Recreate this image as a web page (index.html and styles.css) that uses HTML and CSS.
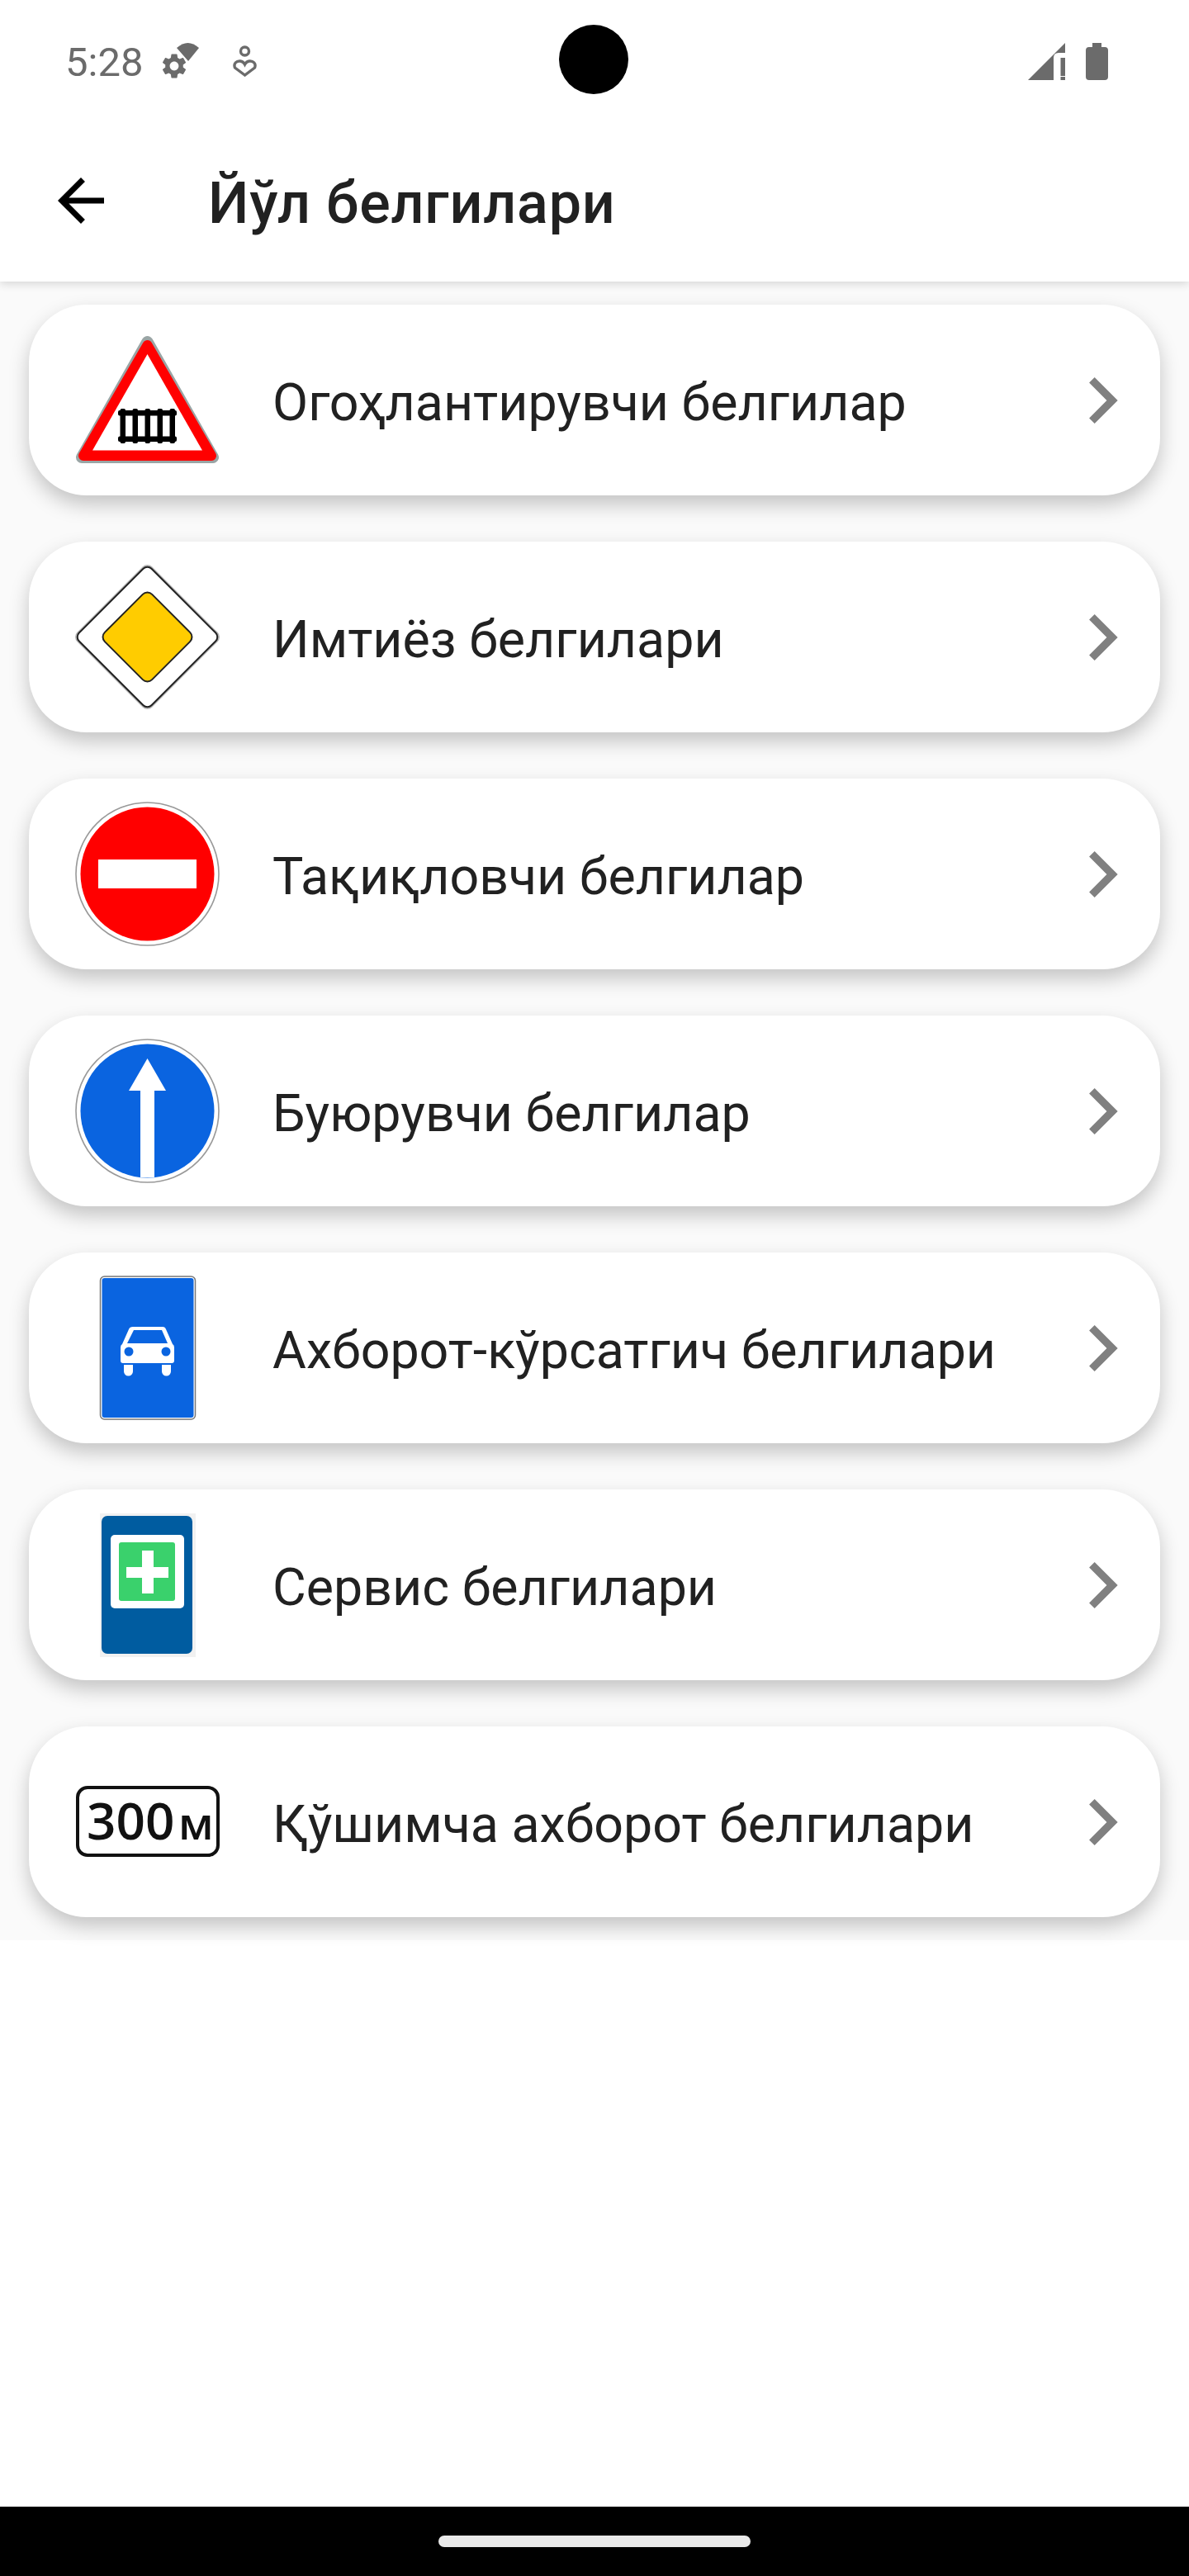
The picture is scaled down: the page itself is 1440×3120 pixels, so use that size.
FILE: index.html
```html
<!DOCTYPE html>
<html lang="uz">
<head>
  <meta charset="UTF-8">
  <title>Йўл белгилари</title>
  <link rel="stylesheet" href="styles.css">
</head>
<body>

<div class="screen">
  <div class="status-bar">
    <span class="time">5:28</span>
    <svg class="st-gear" width="44" height="44" viewBox="0 0 44 44">
      <svg x="-4" y="10" width="36" height="36" viewBox="0 0 24 24"><path d="M19.14 12.94c.04-.3.06-.61.06-.94 0-.32-.02-.64-.07-.94l2.03-1.58c.18-.14.23-.41.12-.61l-1.92-3.32c-.12-.22-.37-.29-.59-.22l-2.39.96c-.5-.38-1.03-.7-1.62-.94l-.36-2.54c-.04-.24-.24-.41-.48-.41h-3.84c-.24 0-.43.17-.47.41l-.36 2.54c-.59.24-1.13.57-1.62.94l-2.39-.96c-.22-.08-.47 0-.59.22L2.74 8.87c-.12.21-.08.47.12.61l2.03 1.58c-.05.3-.09.63-.09.94s.02.64.07.94l-2.03 1.58c-.18.14-.23.41-.12.61l1.92 3.32c.12.22.37.29.59.22l2.39-.96c.5.38 1.03.7 1.62.94l.36 2.54c.05.24.24.41.48.41h3.84c.24 0 .44-.17.47-.41l.36-2.54c.59-.24 1.13-.56 1.62-.94l2.39.96c.22.08.47 0 .59-.22l1.92-3.32c.12-.22.07-.47-.12-.61l-2.01-1.58zM12 15.6c-1.98 0-3.6-1.62-3.6-3.6s1.62-3.6 3.6-3.6 3.6 1.62 3.6 3.6-1.62 3.6-3.6 3.6z"/></svg>
      <path d="M17 6Q30.5-6 44 6L31 22Z"/>
    </svg>
    <svg class="st-person" width="30" height="38" viewBox="0 0 30 38">
      <circle cx="14.5" cy="7" r="5"/>
      <path d="M14.5 36L2.5 27C0.5 22 4.5 18.5 9 19C11.5 19.3 13.5 21 14.5 23C15.5 21 17.5 19.3 20 19C24.5 18.5 28.5 22 26.5 27Z"/>
    </svg>
    <span class="spacer"></span>
    <svg class="st-signal" width="46" height="45" viewBox="0 0 46 45">
      <path d="M0 45L45 0V12H37Q31 12 31 18V45Z"/>
      <rect x="39.5" y="18" width="5.5" height="22"/>
      <rect x="39.5" y="41" width="5.5" height="4"/>
    </svg>
    <svg class="st-battery" width="27" height="45" viewBox="0 0 27 45">
      <path d="M8 0h11v5h4a4 4 0 0 1 4 4v32a4 4 0 0 1-4 4H4a4 4 0 0 1-4-4V9a4 4 0 0 1 4-4h4z"/>
    </svg>
    <div class="camera"></div>
  </div>

  <div class="app-bar">
    <svg class="back" width="84" height="84" viewBox="0 0 24 24"><path d="M20 11H7.83l5.59-5.59L12 4l-8 8 8 8 1.41-1.41L7.83 13H20v-2z"/></svg>
    <h1 class="title">Йўл белгилари</h1>
  </div>

  <div class="list">
    <div class="card">
      <svg class="sign" viewBox="0 0 175 175">
        <polygon points="87.5,17 167,157 8,157" fill="#9aa5a5" stroke="#9aa5a5" stroke-width="14" stroke-linejoin="round"/>
        <polygon points="87.5,21 165,155 10,155" fill="#ff0000" stroke="#ff0000" stroke-width="12" stroke-linejoin="round"/>
        <polygon points="87.5,32 154,148.5 21,148.5" fill="#fff"/>
        <g fill="#000">
          <rect x="52" y="100" width="71" height="6.5" rx="2"/>
          <rect x="52" y="131.5" width="71" height="6.5" rx="2"/>
          <rect x="54.5" y="98" width="6.5" height="42" rx="2"/>
          <rect x="69.5" y="98" width="6.5" height="42" rx="2"/>
          <rect x="84.5" y="98" width="6.5" height="42" rx="2"/>
          <rect x="99.5" y="98" width="6.5" height="42" rx="2"/>
          <rect x="114.5" y="98" width="6.5" height="42" rx="2"/>
        </g>
      </svg>
      <span class="label">Огоҳлантирувчи белгилар</span>
      <svg class="chevron" width="112" height="112" viewBox="0 0 24 24"><path d="M10 6L8.59 7.41 13.17 12l-4.58 4.59L10 18l6-6z"/></svg>
    </div>

    <div class="card">
      <svg class="sign" viewBox="0 0 175 175">
        <rect x="23.3" y="23.3" width="128.4" height="128.4" rx="8" transform="rotate(45 87.5 87.5)" fill="#b5b5b5"/>
        <rect x="25.5" y="25.5" width="124" height="124" rx="7" transform="rotate(45 87.5 87.5)" fill="#fff" stroke="#222" stroke-width="2"/>
        <rect x="47" y="47" width="81" height="81" rx="8" transform="rotate(45 87.5 87.5)" fill="#ffcc00" stroke="#222" stroke-width="2"/>
      </svg>
      <span class="label">Имтиёз белгилари</span>
      <svg class="chevron" width="112" height="112" viewBox="0 0 24 24"><path d="M10 6L8.59 7.41 13.17 12l-4.58 4.59L10 18l6-6z"/></svg>
    </div>

    <div class="card">
      <svg class="sign" viewBox="0 0 175 175">
        <circle cx="87.5" cy="87.5" r="86.5" fill="#fff" stroke="#999" stroke-width="1.6"/>
        <circle cx="87.5" cy="87.5" r="81" fill="#ff0000"/>
        <rect x="28" y="70" width="119" height="35" fill="#fff"/>
      </svg>
      <span class="label">Тақиқловчи белгилар</span>
      <svg class="chevron" width="112" height="112" viewBox="0 0 24 24"><path d="M10 6L8.59 7.41 13.17 12l-4.58 4.59L10 18l6-6z"/></svg>
    </div>

    <div class="card">
      <svg class="sign" viewBox="0 0 175 175">
        <circle cx="87.5" cy="87.5" r="86.5" fill="#fff" stroke="#999" stroke-width="1.6"/>
        <circle cx="87.5" cy="87.5" r="81" fill="#0a64e0"/>
        <path d="M87.5 24L110 63H96V168H79V63H65Z" fill="#fff"/>
      </svg>
      <span class="label">Буюрувчи белгилар</span>
      <svg class="chevron" width="112" height="112" viewBox="0 0 24 24"><path d="M10 6L8.59 7.41 13.17 12l-4.58 4.59L10 18l6-6z"/></svg>
    </div>

    <div class="card">
      <svg class="sign" viewBox="0 0 175 175">
        <rect x="30.5" y="1" width="115" height="173" rx="5" fill="#fff" stroke="#777" stroke-width="1.5"/>
        <rect x="32.5" y="3" width="111" height="169" rx="3" fill="#0a64e0"/>
        <path d="M70 62H106Q109 62 110 65L118 83Q120 84 120 87V103Q120 106 117 106H58Q55 106 55 103V87Q55 84 57 83L65 65Q66 62 70 62Z" fill="#fff"/>
        <path d="M71 66H105L112 82H63Z" fill="#0a64e0"/>
        <circle cx="65" cy="92" r="5.5" fill="#0a64e0"/>
        <circle cx="110" cy="92" r="5.5" fill="#0a64e0"/>
        <path d="M59 108H70V116A5.5 5.5 0 0 1 59 116Z" fill="#fff"/>
        <path d="M105 108H116V116A5.5 5.5 0 0 1 105 116Z" fill="#fff"/>
      </svg>
      <span class="label">Ахборот-кўрсатгич белгилари</span>
      <svg class="chevron" width="112" height="112" viewBox="0 0 24 24"><path d="M10 6L8.59 7.41 13.17 12l-4.58 4.59L10 18l6-6z"/></svg>
    </div>

    <div class="card">
      <svg class="sign" viewBox="0 0 175 175">
        <rect x="30" y="1" width="116" height="174" fill="#f1f1f1"/>
        <rect x="32" y="4" width="110" height="167" rx="7" fill="#005ca0"/>
        <rect x="43" y="27" width="89" height="89" rx="5" fill="#fff"/>
        <rect x="53" y="36" width="68" height="71" rx="3" fill="#3ad16c"/>
        <rect x="62" y="66" width="51" height="13" fill="#fff"/>
        <rect x="81" y="46" width="14" height="52" fill="#fff"/>
      </svg>
      <span class="label">Сервис белгилари</span>
      <svg class="chevron" width="112" height="112" viewBox="0 0 24 24"><path d="M10 6L8.59 7.41 13.17 12l-4.58 4.59L10 18l6-6z"/></svg>
    </div>

    <div class="card">
      <svg class="sign" viewBox="0 0 175 175">
        <rect x="3" y="46" width="170" height="82" rx="12" fill="#fff" stroke="#111" stroke-width="4"/>
        <text class="plate" x="14" y="109">300</text>
        <text class="plate plate-unit" x="125" y="109">м</text>
      </svg>
      <span class="label">Қўшимча ахборот белгилари</span>
      <svg class="chevron" width="112" height="112" viewBox="0 0 24 24"><path d="M10 6L8.59 7.41 13.17 12l-4.58 4.59L10 18l6-6z"/></svg>
    </div>
  </div>

  <div class="empty"></div>

  <div class="nav-bar">
    <div class="pill"></div>
  </div>
</div>

</body>
</html>
```

FILE: styles.css
```css
body {
  margin: 0;
  background: #fff;
  font-family: Roboto, 'Liberation Sans', sans-serif;
}
.screen {
  width: 1440px;
  height: 3120px;
  display: flex;
  flex-direction: column;
  overflow: hidden;
}

/* status bar */
.status-bar {
  position: relative;
  z-index: 2;
  height: 145px;
  padding: 3px 98px 0 79px;
  box-sizing: border-box;
  display: flex;
  align-items: center;
  background: #fff;
  color: #6b6b6b;
  fill: #6b6b6b;
}
.time {
  font-size: 49px;
  font-weight: 400;
  width: 118px;
  padding-top: 3px;
}
.st-person {
  margin-left: 41px;
  fill: none;
  stroke: #6b6b6b;
  stroke-width: 3.4;
}
.spacer {
  flex: 1;
}
.st-battery {
  margin-left: 24px;
}
.camera {
  position: absolute;
  left: 677px;
  top: 30px;
  width: 84px;
  height: 84px;
  border-radius: 50%;
  background: #000;
}

/* app bar */
.app-bar {
  position: relative;
  z-index: 1;
  height: 196px;
  padding-left: 56px;
  display: flex;
  align-items: center;
  background: #fff;
  box-shadow: 0 3px 10px rgba(0,0,0,0.14);
}
.title {
  margin: 0 0 0 112px;
  padding-top: 5px;
  font-size: 70px;
  font-weight: 500;
  letter-spacing: 0.8px;
  color: #212121;
}

/* list */
.list {
  padding: 28px 35px;
  display: flex;
  flex-direction: column;
  gap: 56px;
  background: #fafafa;
}
.card {
  height: 231px;
  padding: 0 14px 0 56px;
  display: flex;
  align-items: center;
  background: #fff;
  border-radius: 70px;
  box-shadow: 0 11px 24px rgba(0,0,0,0.22);
}
.sign {
  width: 175px;
  height: 175px;
  flex: none;
}
.label {
  flex: 1;
  margin-left: 64px;
  padding-top: 6px;
  font-size: 62.7px;
  color: #212121;
}
.chevron {
  flex: none;
  fill: #808080;
}
.plate {
  font-family: 'Open Sans', sans-serif;
  font-size: 62px;
  font-weight: 600;
  fill: #111;
}
.plate-unit {
  font-size: 54px;
}

.empty {
  flex: 1;
}

/* nav bar */
.nav-bar {
  height: 84px;
  background: #000;
  display: flex;
  justify-content: center;
  padding-top: 35px;
  box-sizing: border-box;
}
.pill {
  width: 378px;
  height: 14px;
  border-radius: 7px;
  background: #e9e9e9;
}
```
